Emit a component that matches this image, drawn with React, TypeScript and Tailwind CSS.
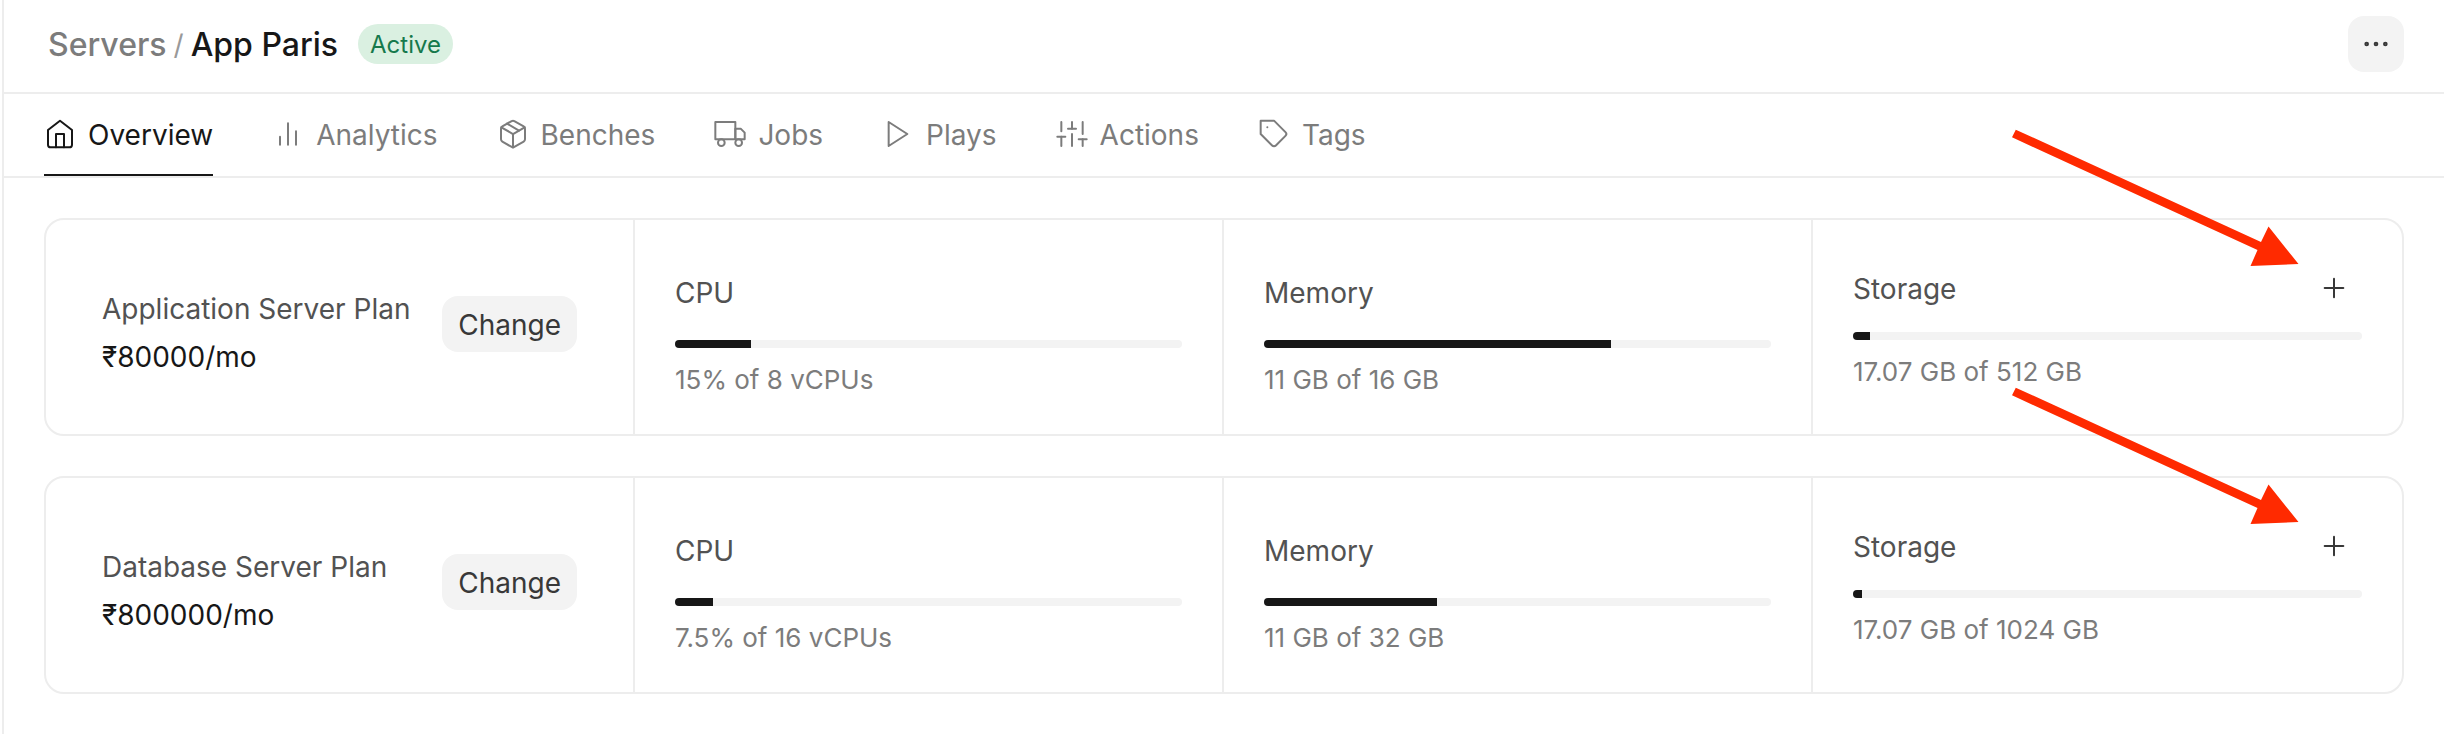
import type { IconType } from "react-icons";
import {
  FiBarChart2,
  FiHome,
  FiMoreHorizontal,
  FiPackage,
  FiPlay,
  FiPlus,
  FiSliders,
  FiTag,
  FiTruck,
} from "react-icons/fi";

type Tab = {
  label: string;
  icon: IconType;
};

type Usage = {
  label: string;
  value: number;
  help: string;
  expandable?: boolean;
};

type Server = {
  title: string;
  price: string;
  usage: Usage[];
};

const TABS: Tab[] = [
  { label: "Overview", icon: FiHome },
  { label: "Analytics", icon: FiBarChart2 },
  { label: "Benches", icon: FiPackage },
  { label: "Jobs", icon: FiTruck },
  { label: "Plays", icon: FiPlay },
  { label: "Actions", icon: FiSliders },
  { label: "Tags", icon: FiTag },
];

const SERVERS: Server[] = [
  {
    title: "Application Server Plan",
    price: "₹80000/mo",
    usage: [
      { label: "CPU", value: 15, help: "15% of 8 vCPUs" },
      { label: "Memory", value: 68.5, help: "11 GB of 16 GB" },
      {
        label: "Storage",
        value: 3.33,
        help: "17.07 GB of 512 GB",
        expandable: true,
      },
    ],
  },
  {
    title: "Database Server Plan",
    price: "₹800000/mo",
    usage: [
      { label: "CPU", value: 7.5, help: "7.5% of 16 vCPUs" },
      { label: "Memory", value: 34.2, help: "11 GB of 32 GB" },
      {
        label: "Storage",
        value: 1.67,
        help: "17.07 GB of 1024 GB",
        expandable: true,
      },
    ],
  },
];

export default function App() {
  return (
    <div className="flex min-h-screen bg-white pl-[2px] font-['Inter',sans-serif] text-[28px] [font-optical-sizing:none]">
      <main className="min-w-0 flex-1 border-l-2 border-[#ededed]">
        <Header />
        <TabBar />
        <div className="flex flex-col gap-10 p-10">
          {SERVERS.map((server) => (
            <ServerCard key={server.title} {...server} />
          ))}
        </div>
      </main>
    </div>
  );
}

function Header() {
  return (
    <header className="flex items-center justify-between border-b-2 border-[#ededed] px-10 pt-4 pb-5">
      <div className="flex items-center gap-5">
        <nav
          aria-label="Breadcrumb"
          className="flex items-center gap-[7px] pt-0.5 pl-1 text-[32px]/[40px] font-medium"
        >
          <a href="#servers" className="text-[#7c7c7c]">
            Servers
          </a>
          <span className="text-[28px] font-normal text-[#999999]">/</span>
          <a href="#app-paris" className="text-[#171717]">
            App Paris
          </a>
        </nav>
        <span className="flex h-10 items-center rounded-full bg-[#daf0e1] px-3 pt-0.5 text-2xl text-[#16794c]">
          Active
        </span>
      </div>
      <button
        type="button"
        aria-label="More options"
        className="grid size-14 place-content-center rounded-2xl bg-[#f3f3f3] text-[#383838]"
      >
        <FiMoreHorizontal className="size-8" strokeWidth={1.5} />
      </button>
    </header>
  );
}

function TabBar() {
  return (
    <nav className="flex gap-[59px] border-b-2 border-[#ededed] px-10">
      {TABS.map(({ label, icon: Icon }, index) => (
        <a
          key={label}
          href={`#${label.toLowerCase()}`}
          aria-current={index === 0 ? "page" : undefined}
          className={`flex h-[82px] items-center gap-3 border-b-2 ${
            index === 0
              ? "border-[#171717] text-[#171717]"
              : "border-transparent text-[#7c7c7c]"
          }`}
        >
          <Icon className="size-8" strokeWidth={1.5} />
          <span className="pt-0.5">{label}</span>
        </a>
      ))}
    </nav>
  );
}

function ServerCard({ title, price, usage }: Server) {
  return (
    <section className="grid min-h-[218px] grid-cols-4 rounded-[20px] border-2 border-[#ededed]">
      <div className="flex items-start justify-between border-r-2 border-[#ededed] px-14 pt-19">
        <div className="flex flex-col gap-[22px] leading-[26px]">
          <h2 className="text-[#525252]">{title}</h2>
          <p className="text-[#171717]">{price}</p>
        </div>
        <button
          type="button"
          className="h-14 rounded-2xl bg-[#f3f3f3] px-4 pt-0.5 text-[#383838]"
        >
          Change
        </button>
      </div>
      {usage.map((item) => (
        <UsageCell key={item.label} {...item} />
      ))}
    </section>
  );
}

function UsageCell({ label, value, help, expandable }: Usage) {
  return (
    <div
      className={`relative px-10 ${
        expandable ? "pt-10" : "border-r-2 border-[#ededed] pt-12"
      }`}
    >
      <div className="flex h-14 items-center justify-between text-[#525252]">
        <h3 className={expandable ? "pt-0.5" : "pb-1.5"}>{label}</h3>
        {expandable ? (
          <button
            type="button"
            aria-label={`Increase ${label}`}
            className="grid size-14 place-content-center rounded-2xl text-[#383838]"
          >
            <FiPlus className="size-8" strokeWidth={1.5} />
          </button>
        ) : null}
      </div>
      <div
        role="progressbar"
        aria-label={label}
        aria-valuenow={value}
        className="mt-4 h-2 overflow-hidden rounded-full bg-[#f3f3f3]"
      >
        <div className="h-full bg-[#171717]" style={{ width: `${value}%` }} />
      </div>
      <p className="mt-4 text-[26px]/[32px] text-[#7c7c7c]">{help}</p>
      {expandable ? <Arrow /> : null}
    </div>
  );
}

// Red callout that points at the plus button
function Arrow() {
  return (
    <svg
      aria-hidden
      viewBox="0 0 287 138"
      className="pointer-events-none absolute -top-[91px] right-[103px] h-[138px] w-[287px]"
    >
      <path
        d="M3.8 0.7 L249 113 L256.5 97.5 L286.5 135 L238.5 137 L245.5 121 L0 8.3 Z"
        fill="#ff2a00"
      />
    </svg>
  );
}
